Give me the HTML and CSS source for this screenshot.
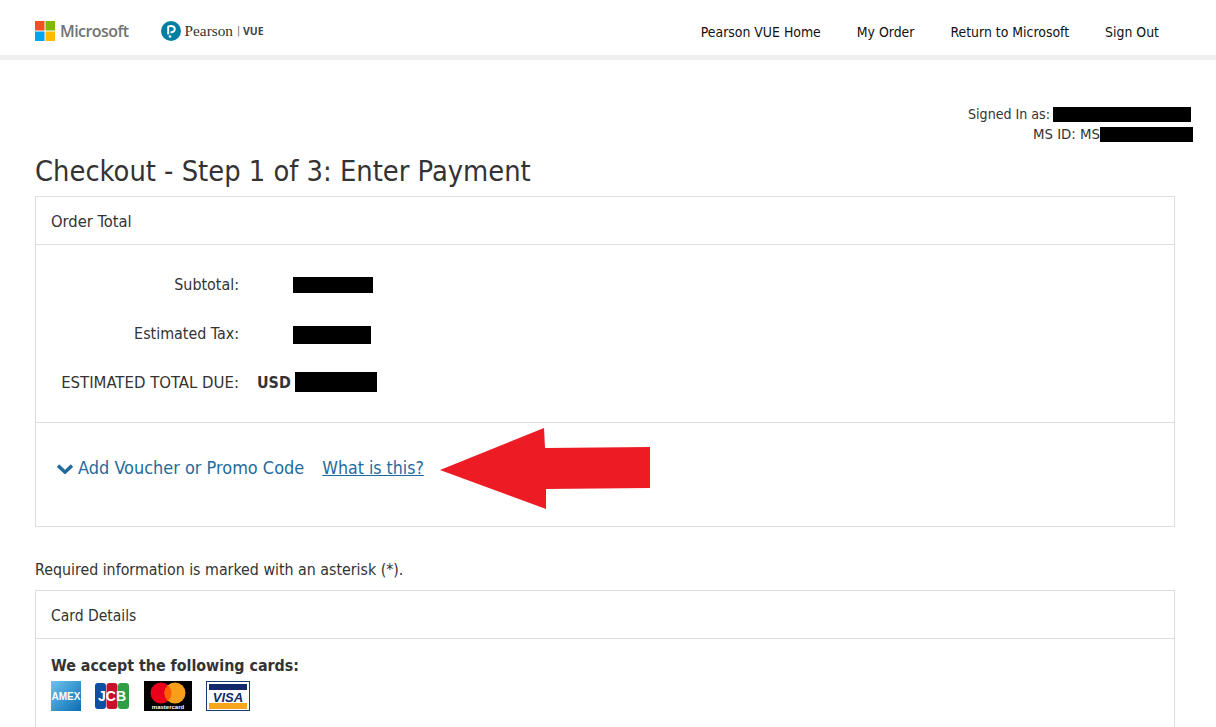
FILE: index.html
```html
<!DOCTYPE html>
<html lang="en">
<head>
  <meta charset="UTF-8" />
  <title>Checkout - Step 1 of 3: Enter Payment</title>
  <link rel="stylesheet" href="styles.css">
</head>
<body>
  <header class="topbar">
    <div class="logos">
      <div class="ms-logo">
        <svg class="ms-mark" width="20" height="20" viewBox="0 0 20 20">
          <rect width="9.5" height="9.5" fill="#f25022" />
          <rect x="10.5" width="9.5" height="9.5" fill="#7fba00" />
          <rect y="10.5" width="9.5" height="9.5" fill="#00a4ef" />
          <rect x="10.5" y="10.5" width="9.5" height="9.5" fill="#ffb900" />
        </svg>
        <span class="ms-name">Microsoft</span>
      </div>
      <div class="pearson-logo">
        <svg width="20" height="22" viewBox="0 0 20 22">
          <circle cx="10" cy="11" r="10" fill="#007fa3" />
          <path d="M7.2 14.500V6.600c2.600-1 6.600-.7 6.600 2.500 0 2.400-2.200 3.400-4.300 3.100" fill="none" stroke="#fff" stroke-width="1.900" />
          <circle cx="9" cy="16.500" r="1.300" fill="#fff" />
        </svg>
        <span class="pearson-name">Pearson</span>
        <span class="pearson-sep">|</span>
        <span class="pearson-vue">VUE</span>
      </div>
    </div>
    <nav class="topnav">
      <a href="#">Pearson VUE Home</a>
      <a href="#">My Order</a>
      <a href="#">Return to Microsoft</a>
      <a href="#">Sign Out</a>
    </nav>
  </header>

  <main class="page">
    <div class="signed-in">
      <div class="signed-row">Signed In as: <span class="redact redact-name"></span></div>
      <div class="signed-row signed-id">MS ID: MS<span class="redact redact-id"></span></div>
    </div>

    <h1>Checkout - Step 1 of 3: Enter Payment</h1>

    <section class="panel">
      <div class="panel-head">Order Total</div>
      <div class="totals">
        <div class="total-row">
          <span class="total-label">Subtotal:</span>
          <span class="total-value total-offset"><span class="redact redact-sub"></span></span>
        </div>
        <div class="total-row">
          <span class="total-label">Estimated Tax:</span>
          <span class="total-value total-offset"><span class="redact redact-tax"></span></span>
        </div>
        <div class="total-row">
          <span class="total-label total-caps">ESTIMATED TOTAL DUE:</span>
          <span class="total-value"><b>USD</b><span class="redact redact-due"></span></span>
        </div>
      </div>
      <div class="voucher">
        <a class="voucher-toggle" href="#">
          <svg width="16" height="10" viewBox="0 0 16 10">
            <path d="M1 1.600l7 6.600 7-6.600" fill="none" stroke="#1f6a9c" stroke-width="3.400" />
          </svg>
          Add Voucher or Promo Code
        </a>
        <a class="voucher-help" href="#">What is this?</a>
        <svg class="arrow" width="210" height="82" viewBox="0 0 210 82">
          <polygon points="0,42 104,0 105,20 210,19 210,60 106,61 106,81" fill="#ed1c24" />
        </svg>
      </div>
    </section>

    <p class="required">Required information is marked with an asterisk (*).</p>

    <section class="panel panel-open">
      <div class="panel-head panel-head-card">Card Details</div>
      <div class="card-body">
        <b class="accept">We accept the following cards:</b>
        <div class="cards">
          <svg width="30" height="30" viewBox="0 0 30 30">
            <defs>
              <linearGradient id="amexFill" x1="0" y1="0" x2="1" y2="1">
                <stop offset="0" stop-color="#6cc4ee" />
                <stop offset="1" stop-color="#0a6db3" />
              </linearGradient>
            </defs>
            <rect width="30" height="30" fill="url(#amexFill)" />
            <text x="15" y="19" class="amex-text">AMEX</text>
          </svg>
          <svg class="card-jcb" width="34" height="26" viewBox="0 0 34 26">
            <rect x="0" width="11" height="26" rx="3" fill="#0b4ea2" />
            <rect x="11.500" width="11" height="26" rx="3" fill="#c8102e" />
            <rect x="23" width="11" height="26" rx="3" fill="#2f9e44" />
            <text x="17" y="18" class="jcb-text">JCB</text>
          </svg>
          <svg class="card-mc" width="48" height="30" viewBox="0 0 48 30">
            <rect width="48" height="30" fill="#000" />
            <circle cx="17" cy="12" r="10.500" fill="#eb001b" />
            <circle cx="31" cy="12" r="10.500" fill="#f79e1b" />
            <path d="M24 4.200a10.500 10.500 0 0 1 0 15.600a10.500 10.500 0 0 1 0-15.600z" fill="#ff5f00" />
            <text x="24" y="28" class="mc-text">mastercard</text>
          </svg>
          <svg width="44" height="30" viewBox="0 0 44 30">
            <rect x=".5" y=".5" width="43" height="29" fill="#fff" stroke="#1a3b6e" />
            <rect x="3" y="3" width="38" height="6" fill="#14296b" />
            <rect x="3" y="22" width="38" height="6" fill="#f7a51c" />
            <text x="22" y="20.500" class="visa-text">VISA</text>
          </svg>
        </div>
      </div>
    </section>
  </main>
</body>
</html>
```

FILE: styles.css
```css
html, body {
  height: 100%;
}
body {
  margin: 0;
  background: #fff;
  color: #333;
  font-family: 'DejaVu Sans Condensed', 'DejaVu Sans', sans-serif;
  font-stretch: condensed;
  font-size: 14px;
  overflow: hidden;
}
a {
  color: inherit;
  text-decoration: none;
}

.topbar {
  height: 55px;
  border-bottom: 5px solid #eee;
  display: flex;
  justify-content: space-between;
  padding: 0 57px 0 35px;
}
.logos {
  display: flex;
  align-items: center;
  gap: 32px;
  padding-top: 6px;
}
.ms-logo, .pearson-logo {
  display: flex;
  align-items: center;
}
.ms-mark {
  margin-right: 5px;
}
.ms-name {
  font-family: 'Open Sans', sans-serif;
  font-stretch: normal;
  font-size: 16px;
  font-weight: 600;
  letter-spacing: -0.55px;
  color: #737373;
}
.pearson-name {
  margin-left: 4px;
  font-family: 'Liberation Serif', serif;
  font-size: 15.3px;
  color: #333;
}
.pearson-sep {
  margin: 0 3px 0 4px;
  font-size: 10px;
  color: #666;
}
.pearson-vue {
  font-family: 'Open Sans', sans-serif;
  font-stretch: normal;
  font-size: 10.5px;
  font-weight: 700;
  color: #444;
}
.topnav {
  display: flex;
  gap: 36px;
  padding-top: 24px;
  color: #111;
  font-size: 13.9px;
}

.page {
  padding: 44px 41px 0 35px;
}
.signed-in {
  margin-right: -18px;
  text-align: right;
  line-height: 20px;
  font-size: 14.1px;
}
.signed-row {
  display: flex;
  justify-content: flex-end;
  align-items: center;
}
.signed-id {
  font-size: 14.8px;
}
.redact {
  display: inline-block;
  background: #000;
}
.redact-name {
  width: 138px;
  height: 15px;
  margin-left: 3px;
  margin-right: 2px;
}
.redact-id {
  width: 93px;
  height: 15px;
}
.redact-sub {
  width: 80px;
  height: 16px;
}
.redact-tax {
  width: 78px;
  height: 18px;
  margin-top: 2px;
}
.redact-due {
  width: 82px;
  height: 20px;
  margin-left: 4px;
  margin-bottom: 2px;
}

h1 {
  margin: 9px 0 7px;
  font-size: 28.75px;
  font-weight: 400;
  line-height: 36px;
}

.panel {
  border: 1px solid #ddd;
}
.panel-open {
  border-bottom: 0;
  padding-bottom: 40px;
}
.panel-head {
  padding: 1px 0 0 15px;
  box-sizing: border-box;
  border-bottom: 1px solid #ddd;
  height: 48px;
  display: flex;
  align-items: center;
  font-size: 16.4px;
}
.panel-head-card {
  padding-top: 2px;
  font-size: 15.5px;
}
.totals {
  padding: 15px 0 15px;
  border-bottom: 1px solid #ddd;
}
.total-row {
  height: 49px;
  display: flex;
  align-items: center;
  font-size: 15.9px;
}
.total-label {
  width: 203px;
  text-align: right;
}
.total-caps {
  font-size: 16.6px;
  white-space: nowrap;
}
.total-value {
  display: flex;
  align-items: center;
  margin-left: 18px;
}
.total-offset {
  margin-left: 54px;
}
.voucher {
  position: relative;
  height: 103px;
  padding: 34px 0 0 21px;
  box-sizing: border-box;
  font-size: 17.95px;
  color: #1f6a9c;
}
.voucher-help {
  margin-left: 13px;
  font-size: 17.6px;
  text-decoration: underline;
}
.arrow {
  position: absolute;
  left: 404px;
  top: 5px;
}

.required {
  margin: 33px 0 10px;
  font-size: 15.8px;
  line-height: 20px;
}
.card-body {
  padding: 16px 15px 0;
  font-size: 15.85px;
}
.accept {
  display: block;
  line-height: 22px;
}
.cards {
  display: flex;
  align-items: center;
  gap: 14px;
  margin-top: 4px;
}
.card-mc {
  margin-left: 1px;
}
.amex-text {
  font: 700 10px 'Liberation Sans', sans-serif;
  fill: #fff;
  text-anchor: middle;
}
.jcb-text {
  font: 700 14px 'Liberation Sans', sans-serif;
  fill: #fff;
  text-anchor: middle;
}
.mc-text {
  font: 700 6px 'Liberation Sans', sans-serif;
  fill: #fff;
  text-anchor: middle;
}
.visa-text {
  font: italic 700 13px 'Liberation Sans', sans-serif;
  fill: #14296b;
  text-anchor: middle;
}
```
